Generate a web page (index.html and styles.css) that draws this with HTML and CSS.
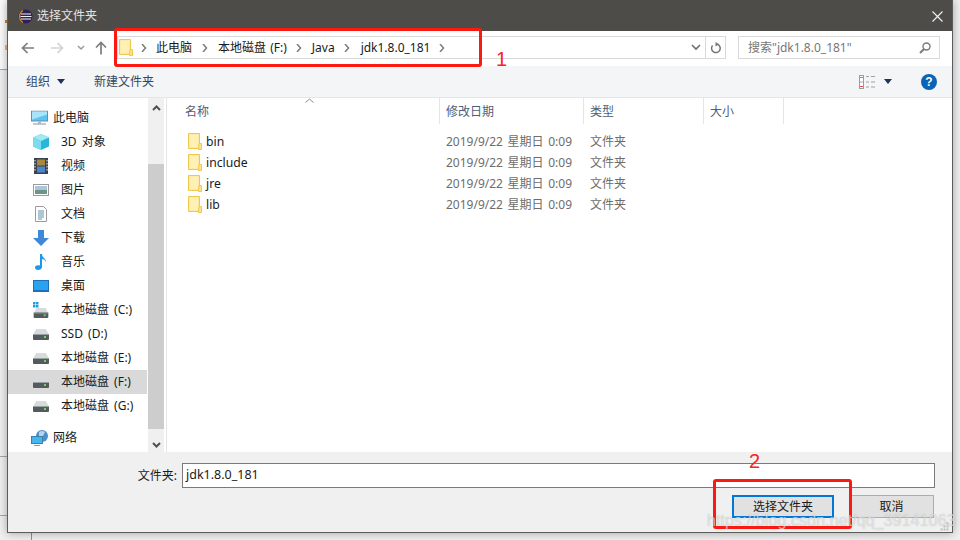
FILE: index.html
```html
<!DOCTYPE html>
<html lang="zh">
<head>
<meta charset="utf-8">
<title>选择文件夹</title>
<link rel="stylesheet" href="styles.css">
</head>
<body>
<svg class="defs" width="0" height="0">
  <defs>
    <symbol id="folder" viewBox="0 0 14 17">
      <path d="M.5.5h11v15H.5z" fill="#fde38f" stroke="#eec94e"/>
      <path d="M1.500 1.500h9v13h-9z" fill="#fff0b5"/>
      <path d="M11 10.500h2.500v6h-3z" fill="#fde38f" stroke="#eec94e"/>
    </symbol>
    <symbol id="drive" viewBox="0 0 16 12">
      <path d="M3 1h10l3 6H0z" fill="#d9dadb"/>
      <rect x="0" y="6" width="16" height="6" rx="1" fill="#545a5e"/>
      <rect x="0" y="6" width="16" height="1" fill="#9a9fa3"/>
      <rect x="11" y="8" width="2" height="2" fill="#5fe04c"/>
    </symbol>
    <symbol id="sep" viewBox="0 0 6 8"><path d="M1 0l3.500 4L1 8" fill="none" stroke="#7b7b7b" stroke-width="1.500"/></symbol>
  </defs>
</svg>

<div class="desktop-strip"></div>
<div class="desktop-line line-a"></div>
<div class="desktop-line line-b"></div>
<div class="desktop-line line-c"></div>
<div class="desktop-vline"></div>
<div class="desktop-tick tick-a"></div>
<div class="desktop-tick tick-b"></div>

<main class="window">
  <header class="titlebar">
    <svg class="app-icon" width="15" height="15" viewBox="0 0 15 15">
      <circle cx="7.500" cy="7.500" r="7" fill="#2c2255"/>
      <path d="M5 1.500A7 7 0 0 0 5 13.500" fill="none" stroke="#e88a1a" stroke-width="1.200"/>
      <path d="M3 5h10M2.500 7.500h11M3 10h10" stroke="#f1f0f5" stroke-width="1.100"/>
    </svg>
    <span class="title">选择文件夹</span>
    <svg class="close" width="11" height="11" viewBox="0 0 11 11"><path d="M.5.500l10 10M10.500.500l-10 10" stroke="#f2f2f2" stroke-width="1.100"/></svg>
  </header>

  <nav class="navbar">
    <div class="nav-buttons">
      <svg width="13" height="12" viewBox="0 0 13 12"><path d="M13 6H2M6.500 1L1.500 6l5 5" fill="none" stroke="#7d7d7d" stroke-width="1.700"/></svg>
      <svg width="13" height="12" viewBox="0 0 13 12"><path d="M0 6h11M6.500 1l5 5-5 5" fill="none" stroke="#d3d3d3" stroke-width="1.700"/></svg>
      <svg width="8" height="6" viewBox="0 0 8 6"><path d="M1 1l3 3 3-3" fill="none" stroke="#9a9a9a" stroke-width="1.500"/></svg>
      <svg width="12" height="14" viewBox="0 0 12 14"><path d="M6 13.500V2M1 6.500l5-5 5 5" fill="none" stroke="#7d7d7d" stroke-width="1.700"/></svg>
    </div>
    <div class="address">
      <div class="crumbs">
        <svg class="crumb-folder" width="14" height="17"><use href="#folder"/></svg>
        <svg class="sep" width="6" height="8"><use href="#sep"/></svg>
        <span class="crumb-first">此电脑</span>
        <svg class="sep" width="6" height="8"><use href="#sep"/></svg>
        <span>本地磁盘 (F:)</span>
        <svg class="sep" width="6" height="8"><use href="#sep"/></svg>
        <span>Java</span>
        <svg class="sep" width="6" height="8"><use href="#sep"/></svg>
        <span class="crumb-last">jdk1.8.0_181</span>
        <svg class="sep" width="6" height="8"><use href="#sep"/></svg>
      </div>
      <svg class="addr-down" width="10" height="7" viewBox="0 0 10 7"><path d="M1 1l4 4 4-4" fill="none" stroke="#6d6d6d" stroke-width="1.600"/></svg>
      <div class="refresh">
        <svg width="11" height="12" viewBox="0 0 11 12"><path d="M7.500 2.300A4.300 4.300 0 1 1 2.600 3.500" fill="none" stroke="#757575" stroke-width="1.500"/><path d="M5.500 0v4.500L9 2.300z" fill="#757575"/></svg>
      </div>
    </div>
    <div class="search">
      <span>搜索"jdk1.8.0_181"</span>
      <svg width="12" height="12" viewBox="0 0 12 12"><circle cx="7.500" cy="4.500" r="3.500" fill="none" stroke="#7a7a7a" stroke-width="1.400"/><path d="M5 7l-4 4" stroke="#7a7a7a" stroke-width="2"/></svg>
    </div>
  </nav>

  <div class="toolbar">
    <span class="tool organize">组织<i class="caret"></i></span>
    <span class="tool">新建文件夹</span>
    <div class="tool-right">
      <svg width="16" height="14" viewBox="0 0 16 14">
        <rect x=".5" y=".5" width="4" height="13" fill="#fff" stroke="#9d9d9d"/>
        <path d="M1 2.500h3" stroke="#6d8fc0"/><path d="M1 7h3" stroke="#a8a8a8"/><path d="M1 11.500h3" stroke="#d9534f"/>
        <path d="M7 1.500h3M12 1.500h4M7 7h3M12 7h4M7 12h3M12 12h4" stroke="#a1a1a1" stroke-width="1.200"/>
      </svg>
      <i class="caret view-caret"></i>
      <svg class="help" width="16" height="16" viewBox="0 0 16 16"><circle cx="8" cy="8" r="8" fill="#0a64b8"/><text x="8" y="12.300" class="help-q">?</text></svg>
    </div>
  </div>

  <div class="content">
    <aside class="sidebar">
      <ul class="tree">
        <li class="node top">
          <svg width="18" height="15" viewBox="0 0 18 15"><rect x=".5" y=".5" width="16" height="10" fill="#5cc4f3" stroke="#6d8ca3"/><path d="M1 1h15v3L1 9z" fill="#a9e4fb"/><path d="M7 11h3v2H7z" fill="#a8b8c4"/><path d="M2 13.500h13" stroke="#7f97a9" stroke-width="1.200"/></svg>
          <span>此电脑</span>
        </li>
        <li class="node">
          <svg width="16" height="16" viewBox="0 0 16 16"><path d="M8 0l8 3.500v9L8 16l-8-3.500v-9z" fill="#29b6d8"/><path d="M8 0l8 3.500L8 7 0 3.500z" fill="#a3e9f5"/><path d="M0 3.500L8 7v9l-8-3.500z" fill="#7adcec"/></svg>
          <span>3D 对象</span>
        </li>
        <li class="node">
          <svg width="14" height="16" viewBox="0 0 14 16"><rect width="14" height="16" fill="#39424c"/><rect x="3" y="1.500" width="8" height="6" fill="#a9883c"/><rect x="3" y="8.500" width="8" height="6" fill="#4c86c9"/><path d="M1 2v12M13 2v12" stroke="#cfd4d8" stroke-width="1.200" stroke-dasharray="1.500 1.500"/></svg>
          <span>视频</span>
        </li>
        <li class="node">
          <svg width="16" height="12" viewBox="0 0 16 12"><rect x=".5" y=".5" width="15" height="11" fill="#fff" stroke="#9b9b9b"/><rect x="2" y="2" width="12" height="4" fill="#a9c7dc"/><rect x="2" y="6" width="12" height="4" fill="#6f9484"/></svg>
          <span>图片</span>
        </li>
        <li class="node">
          <svg width="12" height="16" viewBox="0 0 12 16"><path d="M.5.500h8l3 3v12H.5z" fill="#fff" stroke="#9b9b9b"/><path d="M3 5h6M3 7h6M3 9h6M3 11h6M3 13h4" stroke="#5a8fa8"/></svg>
          <span>文档</span>
        </li>
        <li class="node">
          <svg width="16" height="16" viewBox="0 0 16 16"><path d="M5 0h6v8h5l-8 8-8-8h5z" fill="#3d88d9"/></svg>
          <span>下载</span>
        </li>
        <li class="node">
          <svg width="12" height="16" viewBox="0 0 12 16"><path d="M5 0h2c0 4 4 4 4 8-1-2-2-3-4-3v8c0 2-2 3-4 3s-3-1-3-2.500S2 11 5 11.500z" fill="#1e97ea"/></svg>
          <span>音乐</span>
        </li>
        <li class="node">
          <svg width="16" height="12" viewBox="0 0 16 12"><rect width="16" height="12" fill="#1d6fb8"/><rect x="1" y="1" width="14" height="9" fill="#29a3f0"/></svg>
          <span>桌面</span>
        </li>
        <li class="node win-drive">
          <svg width="16" height="16" viewBox="0 0 16 16"><path d="M0 0h2.500v2.500H0zM3 0h2.500v2.500H3zM0 3h2.500v2.500H0zM3 3h2.500v2.500H3z" fill="#1ba1e2"/><use href="#drive" y="5" width="16" height="11"/></svg>
          <span>本地磁盘 (C:)</span>
        </li>
        <li class="node">
          <svg width="16" height="12"><use href="#drive"/></svg>
          <span>SSD (D:)</span>
        </li>
        <li class="node">
          <svg width="16" height="12"><use href="#drive"/></svg>
          <span>本地磁盘 (E:)</span>
        </li>
        <li class="node selected">
          <svg width="16" height="12"><use href="#drive"/></svg>
          <span>本地磁盘 (F:)</span>
        </li>
        <li class="node">
          <svg width="16" height="12"><use href="#drive"/></svg>
          <span>本地磁盘 (G:)</span>
        </li>
        <li class="node top network">
          <svg width="18" height="16" viewBox="0 0 18 16"><circle cx="11" cy="6" r="6" fill="#4d8fc9"/><path d="M8 2a5 5 0 0 1 6 0l-2 4H8z" fill="#b9d4ea"/><rect x=".5" y="6.500" width="11" height="7" fill="#42b6ef" stroke="#3f7fa8"/><path d="M3 15.500h6" stroke="#8aa0b0" stroke-width="1.200"/></svg>
          <span>网络</span>
        </li>
      </ul>
      <div class="scrollbar">
        <svg width="9" height="6" viewBox="0 0 9 6"><path d="M1 5l3.500-3.500L8 5" fill="none" stroke="#505050" stroke-width="2"/></svg>
        <div class="thumb"></div>
        <svg width="9" height="6" viewBox="0 0 9 6"><path d="M1 1l3.500 3.500L8 1" fill="none" stroke="#505050" stroke-width="2"/></svg>
      </div>
    </aside>

    <section class="list">
      <div class="row head">
        <div class="cell name-col">名称<svg class="sort" width="9" height="5" viewBox="0 0 9 5"><path d="M.5 4.500l4-3.500 4 3.500" fill="none" stroke="#8a8a8a"/></svg></div>
        <div class="cell date-col">修改日期</div>
        <div class="cell type-col">类型</div>
        <div class="cell size-col">大小</div>
      </div>
      <div class="files">
        <div class="row file"><div class="name-col fname"><svg width="14" height="17"><use href="#folder"/></svg><span>bin</span></div><div class="date-col">2019/9/22 星期日 0:09</div><div class="type-col">文件夹</div></div>
        <div class="row file"><div class="name-col fname"><svg width="14" height="17"><use href="#folder"/></svg><span>include</span></div><div class="date-col">2019/9/22 星期日 0:09</div><div class="type-col">文件夹</div></div>
        <div class="row file"><div class="name-col fname"><svg width="14" height="17"><use href="#folder"/></svg><span>jre</span></div><div class="date-col">2019/9/22 星期日 0:09</div><div class="type-col">文件夹</div></div>
        <div class="row file"><div class="name-col fname"><svg width="14" height="17"><use href="#folder"/></svg><span>lib</span></div><div class="date-col">2019/9/22 星期日 0:09</div><div class="type-col">文件夹</div></div>
      </div>
    </section>
  </div>

  <footer class="footer">
    <div class="field">
      <label class="field-label">文件夹:</label>
      <div class="field-input">jdk1.8.0_181</div>
    </div>
    <div class="actions">
      <button class="btn primary">选择文件夹</button>
      <button class="btn cancel">取消</button>
    </div>
    <svg class="grip" width="9" height="9" viewBox="0 0 9 9"><path d="M6.500.500h2v2h-2zM3.500 3.500h2v2h-2zM6.500 3.500h2v2h-2zM.500 6.500h2v2h-2zM3.500 6.500h2v2h-2zM6.500 6.500h2v2h-2z" fill="#bdbdbd"/></svg>
  </footer>
</main>

<div class="mark mark-one"></div>
<div class="mark mark-two"></div>
<span class="mark-num num-one">1</span>
<span class="mark-num num-two">2</span>
<span class="watermark">https://blog.csdn.net/qq_39141063</span>
</body>
</html>
```
FILE: styles.css
```css
* { box-sizing: border-box; }
html, body { margin: 0; height: 100%; }
body {
  width: 960px;
  height: 540px;
  overflow: hidden;
  position: relative;
  background: #f0f0f0;
  font: 12px/16px "Noto Sans", "Noto Sans CJK SC", sans-serif;
  color: #1a1a1a;
}
.defs { position: absolute; }
svg { display: block; flex: none; }

.desktop-strip { position: absolute; left: 0; top: 0; width: 8px; height: 69px; background: #fbfbfb; }
.desktop-line { position: absolute; left: 0; width: 8px; height: 1px; background: #a8a8a8; }
.line-a { top: 69px; }
.line-b { top: 456px; }
.line-c { top: 515px; }
.desktop-vline { position: absolute; left: 31px; top: 533px; width: 1px; height: 7px; background: #8f8f8f; }
.desktop-tick { position: absolute; left: 5px; width: 2px; height: 3px; background: #b5701f; z-index: 1; }
.tick-a { top: 20px; }
.tick-b { top: 45px; height: 5px; background: #cf9a63; }

.window {
  position: absolute;
  left: 7px;
  top: 0;
  width: 946px;
  height: 533px;
  display: flex;
  flex-direction: column;
  background: #fff;
  border: 1px solid #5c5c5c;
  border-top-color: #4e4c49;
  box-shadow: 0 0 9px rgba(0, 0, 0, .34);
}

.titlebar {
  height: 30px;
  flex: none;
  display: flex;
  align-items: center;
  background: #4e4c49;
  padding: 0 0 0 10px;
}
.title { margin-left: 4px; color: #e4e4e4; }
.close { margin-left: auto; margin-right: 9px; }

.navbar { height: 35px; flex: none; display: flex; align-items: flex-start; background: #fff; padding: 5px 0 0 13px; }
.nav-buttons { display: flex; align-items: center; width: 96px; height: 24px; }
.nav-buttons svg:nth-child(2) { margin-left: 17px; }
.nav-buttons svg:nth-child(3) { margin-left: 13px; }
.nav-buttons svg:nth-child(4) { margin-left: 10px; }

.address {
  width: 609px;
  height: 23px;
  display: flex;
  align-items: center;
  border: 1px solid #d9d9d9;
}
.crumbs { flex: 1; display: flex; align-items: center; padding-left: 1px; color: #1a1a1a; }
.crumbs span { margin: 0 9px 0 10px; white-space: nowrap; word-spacing: 1px; }
.crumbs .crumb-first { margin: 0 10px 0 9px; }
.crumbs .crumb-last { margin-left: 11px; }
.crumb-folder { margin-right: 8px; }
.addr-down { margin-right: 4px; }
.refresh { width: 20px; height: 21px; border-left: 1px solid #d9d9d9; display: flex; align-items: center; justify-content: center; }

.search {
  width: 202px;
  height: 23px;
  margin-left: 12px;
  display: flex;
  align-items: center;
  justify-content: space-between;
  padding: 0 8px 0 9px;
  border: 1px solid #d9d9d9;
  color: #777;
}

.toolbar {
  height: 32px;
  flex: none;
  display: flex;
  align-items: center;
  padding: 0 15px 0 18px;
  background: #f4f5f7;
  border-bottom: 1px solid #e5e5e5;
  color: #33475f;
}
.organize { display: flex; align-items: center; width: 68px; }
.caret { width: 0; height: 0; border: 4px solid transparent; border-top: 5px solid #1f3555; border-bottom: 0; margin-left: 7px; display: block; }
.tool-right { margin-left: auto; display: flex; align-items: center; }
.view-caret { margin-left: 9px; }
.help { margin-left: 29px; }
.help-q { font: 700 12px "Liberation Sans", sans-serif; fill: #fff; text-anchor: middle; }

.content { flex: 1; min-height: 0; display: flex; background: #fff; }

.sidebar { width: 159px; flex: none; display: flex; border-right: 1px solid #e5e5e5; }
.tree { list-style: none; margin: 0 1px 0 0; padding: 8px 0 0; width: 139px; flex: none; }
.node { height: 24px; display: flex; align-items: center; padding-left: 32px; position: relative; white-space: nowrap; }
.node svg { position: absolute; left: 33px; top: 50%; transform: translate(-50%, -50%); }
.node span { margin-left: 21px; word-spacing: 2px; }
.node.top { padding-left: 24px; }
.node.top svg { left: 32px; }
.node.network { margin-top: 8px; }
.selected { background: #d9d9d9; }

.scrollbar { width: 16px; display: flex; flex-direction: column; align-items: center; background: #f0f0f0; padding-top: 7px; }
.thumb { width: 16px; flex: none; height: 265px; margin: 53px 0 13px; background: #cdcdcd; }

.list { flex: 1; min-width: 0; }
.row { display: flex; align-items: center; }
.head { height: 28px; color: #4c607a; }
.cell { height: 26px; align-self: flex-start; display: flex; align-items: center; border-right: 1px solid #e5e5e5; padding: 2px 0 0 6px; position: relative; }
.name-col { width: 273px; }
.date-col { width: 144px; }
.type-col { width: 120px; }
.size-col { width: 80px; }
.head .name-col { padding-left: 18px; }
.sort { position: absolute; left: 138px; top: 0; }
.files { padding-top: 5px; }
.file { height: 21px; color: #6d6d6d; }
.file .date-col { padding-left: 6px; word-spacing: 1.500px; }
.file .type-col { padding-left: 6px; }
.fname { display: flex; align-items: center; padding-left: 21px; color: #1a1a1a; font-size: 12.200px; }
.fname span { margin-left: 4px; }

.footer { height: 80px; flex: none; background: #f0f0f0; padding: 11px 17px 0 0; display: flex; flex-direction: column; position: relative; }
.field { display: flex; align-items: center; }
.field-label { width: 174px; text-align: right; padding-right: 5px; }
.field-input { flex: 1; height: 25px; padding: 0 3px 0 3px; line-height: 22px; border: 1px solid #7a7a7a; background: #fff; font-size: 12.500px; }
.actions { display: flex; justify-content: flex-end; gap: 15px; margin: 7px 1px 0 0; }
.btn { height: 23px; padding: 0; font: inherit; color: #1a1a1a; background: #e1e1e1; border: 1px solid #adadad; }
.primary { width: 102px; border: 2px solid #0078d7; }
.cancel { width: 85px; }
.grip { position: absolute; right: 3px; bottom: 1px; }

.mark { position: absolute; border: 3px solid #fb1a12; border-radius: 3px; }
.mark-one { left: 114px; top: 28px; width: 368px; height: 39px; }
.mark-two { left: 713px; top: 479px; width: 139px; height: 50px; }
.mark-num { position: absolute; color: #f9241a; font: 20px/24px "Liberation Sans", sans-serif; }
.num-one { left: 496px; top: 47px; }
.num-two { left: 749px; top: 449px; }
.watermark { position: absolute; left: 707px; top: 511px; font: 16px/20px "Liberation Sans", sans-serif; letter-spacing: .1px; color: rgba(255, 255, 255, .55); text-shadow: 0 0 1px rgba(120, 120, 120, .5); white-space: nowrap; }
```
